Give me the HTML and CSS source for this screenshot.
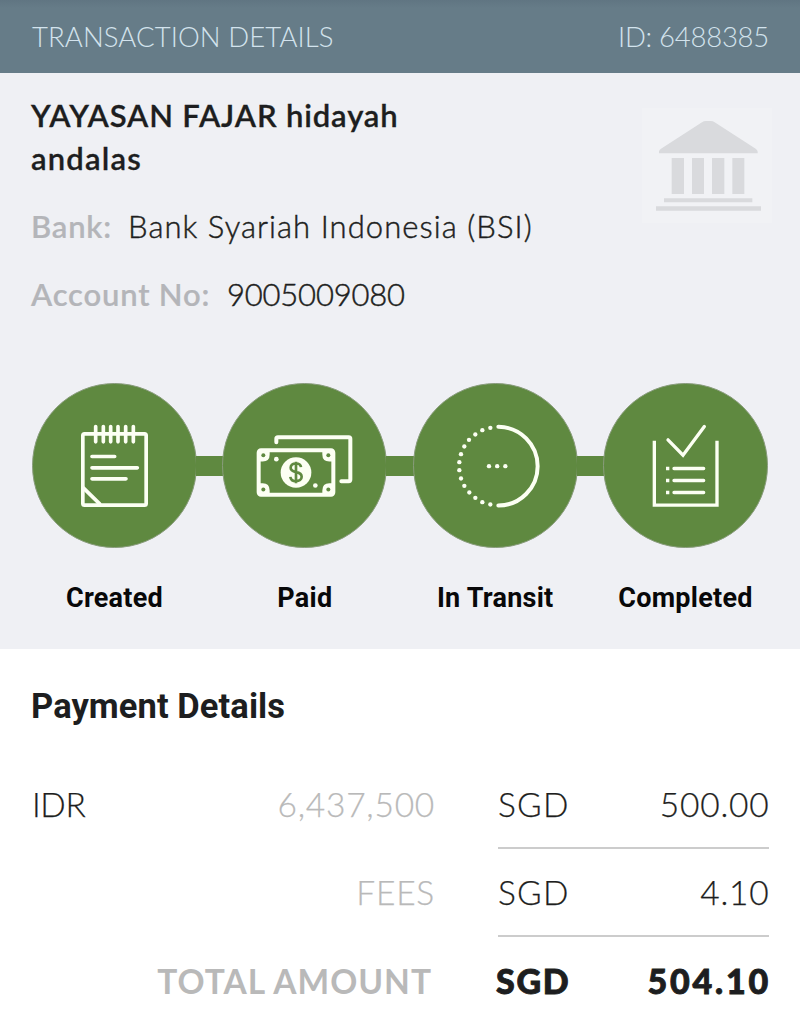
FILE: index.html
```html
<!DOCTYPE html>
<html lang="en">
<head>
<meta charset="utf-8">
<title>Transaction Details</title>
<link rel="stylesheet" href="styles.css">
</head>
<body>
<header class="topbar">
  <span class="topbar-title">TRANSACTION DETAILS</span>
  <span class="topbar-id">ID: 6488385</span>
</header>
<section class="summary">
  <div class="recipient">
    <div class="recipient-text">
      <h1 class="name"><span class="name-first">YAYASAN FAJAR hidayah</span><br><span class="name-second">andalas</span></h1>
      <p class="field"><span class="label label-bank">Bank:</span><span class="value value-bank">Bank Syariah Indonesia (BSI)</span></p>
      <p class="field"><span class="label label-account">Account No:</span><span class="value value-account">9005009080</span></p>
    </div>
    <svg class="bank" viewBox="726 324 390 345" aria-hidden="true">
      <path d="M777 460V454Q778 449 783 446L906 367Q911 363 918 363H932Q939 363 944 367L1067 446Q1073 450 1073 455V460Z"/>
      <path d="M815 474h37v108h-37zM876 474h36v108h-36zM936 474h37v108h-37zM997 474h36v108h-36zM792 595h265v12H792zM768 619h315v13H768z"/>
    </svg>
  </div>
  <div class="steps">
    <div class="step">
      <svg class="disc" viewBox="36 39.5 495 495" aria-hidden="true">
        <circle class="face" cx="283.5" cy="287" r="246"/>
        <g class="line" stroke-width="11">
          <rect x="188.500" y="192" width="190" height="214" rx="5"/>
          <path d="M227 170v46M250 170v46M272 170v46M294 170v46M317 170v46M340 170v46"/>
          <path d="M216 260h68M216 294h136M216 327h102M190 354l49 48"/>
        </g>
      </svg>
      <span class="step-label">Created</span>
    </div>
    <span class="link"></span>
    <div class="step">
      <svg class="disc" viewBox="37 39.500 495 495" aria-hidden="true">
        <circle class="face" cx="284.5" cy="287" r="246"/>
        <g class="line" stroke-width="12">
          <path d="M200 217V207Q200 202 205 202H417Q422 202 422 207V329Q422 334 417 334H395"/>
          <rect x="147" y="241.500" width="224" height="133" rx="7"/>
        </g>
        <g class="solid">
          <path d="M147 241h33v13q0 21-21 21h-12zM371 241h-33v13q0 21 21 21h12zM147 375h33v-13q0-22-21-22h-12zM371 375h-33v-13q0-22 21-22h12z"/>
          <circle cx="259" cy="308" r="46"/><circle cx="200" cy="268" r="7"/><circle cx="317" cy="347" r="7"/>
        </g>
        <g class="hole"><circle cx="161" cy="256" r="6"/><circle cx="356" cy="256" r="6"/><circle cx="161" cy="359" r="6"/><circle cx="356" cy="359" r="6"/></g>
        <path class="dollar" d="M274 292C273 283 267 281 259 281C249 281 243 286 243 294C243 302 249 305 259 307C270 309 276 313 276 321C276 329 269 334 259 334C249 334 243 329 242 321M259 276V340"/>
      </svg>
      <span class="step-label">Paid</span>
    </div>
    <span class="link"></span>
    <div class="step">
      <svg class="disc" viewBox="38 39.500 495 495" aria-hidden="true">
        <circle class="face" cx="285.5" cy="287" r="246"/>
        <path class="line" stroke-width="12" d="M294 171A118 118 0 0 1 294 407"/>
        <g class="solid">
          <circle cx="270" cy="174" r="6.500"/><circle cx="246" cy="181" r="6.500"/><circle cx="225" cy="194" r="6.500"/><circle cx="206" cy="210" r="6.500"/><circle cx="192" cy="230" r="6.500"/><circle cx="182" cy="253" r="6.500"/><circle cx="177" cy="277" r="6.500"/><circle cx="177" cy="301" r="6.500"/><circle cx="182" cy="326" r="6.500"/><circle cx="192" cy="348" r="6.500"/><circle cx="207" cy="368" r="6.500"/><circle cx="225" cy="384" r="6.500"/><circle cx="246" cy="397" r="6.500"/><circle cx="270" cy="404" r="6.500"/>
          <circle cx="266" cy="289" r="6.500"/><circle cx="290.500" cy="289" r="6.500"/><circle cx="315" cy="289" r="6.500"/>
        </g>
      </svg>
      <span class="step-label">In Transit</span>
    </div>
    <span class="link"></span>
    <div class="step">
      <svg class="disc" viewBox="39 39.500 495 495" aria-hidden="true">
        <circle class="face" cx="286.5" cy="287" r="246"/>
        <path class="line square" stroke-width="10" d="M193 213V406H381V213"/>
        <path class="line check" stroke-width="10" d="M234 210L279 256L343 170"/>
        <path class="line" stroke-width="10" d="M252 296h89M252 332h89M252 368h89"/>
        <path class="solid" d="M228 291h10v10h-10zM228 327h10v10h-10zM228 363h10v10h-10z"/>
      </svg>
      <span class="step-label">Completed</span>
    </div>
  </div>
</section>
<section class="payment">
  <h2 class="payment-title">Payment Details</h2>
  <div class="row">
    <span class="idr">IDR</span><span class="muted amount-idr">6,437,500</span>
    <div class="total"><span class="sgd">SGD</span><span class="amount">500.00</span></div>
  </div>
  <div class="row">
    <span></span><span class="muted fees">FEES</span>
    <div class="total"><span class="sgd">SGD</span><span class="amount">4.10</span></div>
  </div>
  <div class="row row-total">
    <span class="muted total-label">TOTAL AMOUNT</span>
    <div class="total"><span class="sgd-bold">SGD</span><span class="amount-bold">504.10</span></div>
  </div>
</section>
</body>
</html>
```
FILE: styles.css
```css
* { box-sizing: border-box; }
body { margin: 0; width: 800px; height: 1026px; overflow: hidden; background: #fff; color: #1d1e20; font-family: Lato, "Liberation Sans", sans-serif; }
span { white-space: nowrap; }
.topbar { display: flex; justify-content: space-between; align-items: center; height: 73px; padding: 0 31px 0 32px; background: linear-gradient(#607582, #667c88 8px); color: #d3e3ed; font-size: 27.5px; font-weight: 300; }
.topbar-title { letter-spacing: 0.1px; }
.topbar-id { letter-spacing: -0.25px; }
.summary { height: 576px; padding: 21px 32px 0 31px; background: #eff0f4; }
.recipient { display: flex; justify-content: space-between; height: 289px; }
.name { margin: 0; font-size: 31px; line-height: 42.5px; font-weight: 600; letter-spacing: 0.85px; -webkit-text-stroke: 0.3px currentColor; }
.name-second { letter-spacing: 1.2px; }
.field { display: flex; margin: 26px 0 0; font-size: 31px; line-height: 42px; }
.label { color: #b4b5b9; font-weight: 600; letter-spacing: 0.8px; -webkit-text-stroke: 0.2px currentColor; }
.label-bank { width: 97px; }
.label-account { width: 196px; }
.value { font-weight: 300; -webkit-text-stroke: 0.45px currentColor; }
.value-bank { letter-spacing: 1.06px; }
.value-account { letter-spacing: -0.2px; }
.bank { flex: none; width: 130px; height: 115px; margin-top: 14px; margin-right: -4px; background: #f1f2f5; fill: #d9dadd; }
.steps { display: flex; align-items: flex-start; margin-left: 1px; }
.step { display: flex; flex-direction: column; align-items: center; width: 165px; }
.link { flex: 1; height: 20px; margin: 73px -1px 0; background: #5f8940; }
.disc { display: block; width: 165px; height: 165px; }
.face { fill: #5f8940; stroke: #899c7c; stroke-width: 3; }
.line { fill: none; stroke: #fcfff3; stroke-linecap: round; stroke-linejoin: round; }
.square { stroke-linecap: butt; stroke-linejoin: miter; }
.check { stroke-linejoin: miter; }
.solid { fill: #fcfff3; }
.hole { fill: #5f8940; }
.dollar { fill: none; stroke: #5f8940; stroke-width: 8; }
.step-label { margin-top: 30px; color: #080809; font: 700 27px/40px Roboto, sans-serif; letter-spacing: 0.25px; }
.payment { padding: 36px 31px 0; }
.payment-title { margin: 0 0 33px; font: 700 34.5px/43px Roboto, sans-serif; letter-spacing: 0.08px; }
.row { display: grid; grid-template-columns: 101px 303px 271px; height: 88px; line-height: 86px; font-size: 33.5px; font-weight: 300; -webkit-text-stroke: 0.25px currentColor; }
.total { display: flex; justify-content: space-between; width: 271px; height: 88px; margin-left: 63px; border-bottom: 2px solid #ccc; }
.idr { padding-left: 1px; letter-spacing: -0.4px; }
.muted { color: #b9b9b9; text-align: right; }
.amount-idr, .fees { letter-spacing: 0.75px; }
.sgd { letter-spacing: 1.2px; }
.amount { margin-right: -0.5px; letter-spacing: 0.8px; }
.row-total { grid-template-columns: 404px 271px; line-height: 88px; font-weight: 700; -webkit-text-stroke: 0; }
.total-label { padding-right: 3px; letter-spacing: 1px; }
.row-total .total { border: 0; }
.sgd-bold, .amount-bold { font-weight: 900; font-size: 34px; -webkit-text-stroke: 0.9px currentColor; }
.sgd-bold { margin-left: -2px; letter-spacing: 1.7px; }
.amount-bold { margin-right: -2px; letter-spacing: 2.8px; }
```
